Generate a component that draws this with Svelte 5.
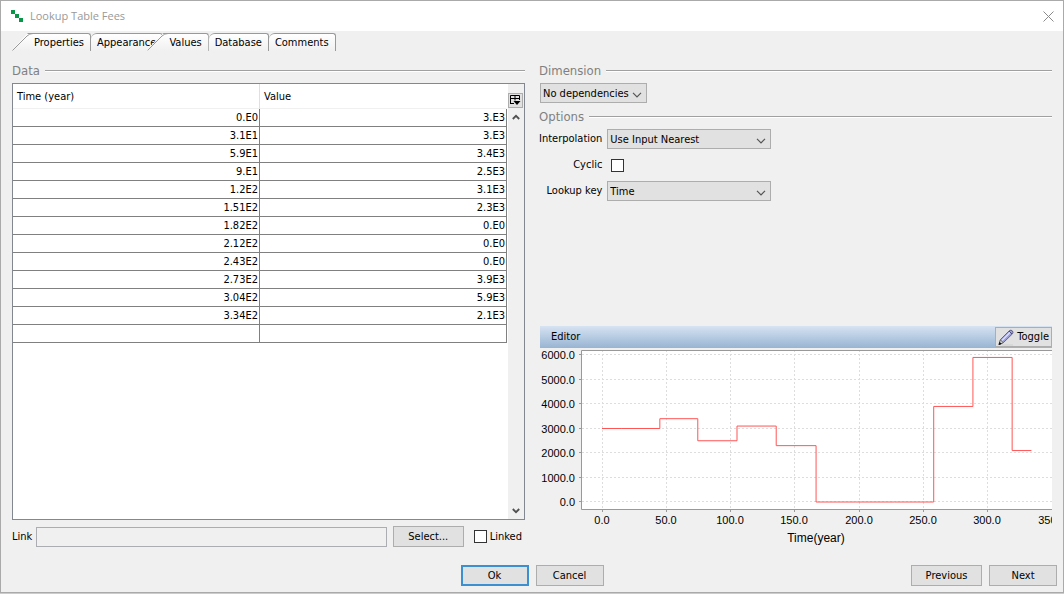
<script lang="ts">
  const tabs = ['Properties', 'Appearance', 'Values', 'Database', 'Comments'];
  let activeTab = $state('Values');

  // time / value pairs of the lookup table
  const rows = [
    { time: 0, value: 3000, timeText: '0.E0', valueText: '3.E3' },
    { time: 31, value: 3000, timeText: '3.1E1', valueText: '3.E3' },
    { time: 59, value: 3400, timeText: '5.9E1', valueText: '3.4E3' },
    { time: 90, value: 2500, timeText: '9.E1', valueText: '2.5E3' },
    { time: 120, value: 3100, timeText: '1.2E2', valueText: '3.1E3' },
    { time: 151, value: 2300, timeText: '1.51E2', valueText: '2.3E3' },
    { time: 182, value: 0, timeText: '1.82E2', valueText: '0.E0' },
    { time: 212, value: 0, timeText: '2.12E2', valueText: '0.E0' },
    { time: 243, value: 0, timeText: '2.43E2', valueText: '0.E0' },
    { time: 273, value: 3900, timeText: '2.73E2', valueText: '3.9E3' },
    { time: 304, value: 5900, timeText: '3.04E2', valueText: '5.9E3' },
    { time: 334, value: 2100, timeText: '3.34E2', valueText: '2.1E3' }
  ];

  let linked = $state(false);
  let cyclic = $state(false);
  let link = $state('');

  // Chart scales
  let chartWidth = $state(513);
  const xTicks = [0, 50, 100, 150, 200, 250, 300, 350];
  const yTicks = [0, 1000, 2000, 3000, 4000, 5000, 6000];
  const originX = 63;
  const xScale = $derived((chartWidth - originX) / 350);

  function px(time: number) {
    return originX + time * xScale;
  }

  function py(value: number) {
    return 154 - value * 0.0245;
  }

  // Nearest interpolation: the value changes half way between two points
  const stepPath = $derived.by(() => {
    let d = `M${px(rows[0].time)} ${py(rows[0].value)}`;
    for (let i = 1; i < rows.length; i++) {
      d += `H${px((rows[i - 1].time + rows[i].time) / 2)}V${py(rows[i].value)}`;
    }
    return d + `H${px(rows[rows.length - 1].time)}`;
  });
</script>

{#snippet chevron()}
  <svg class="chevron" width="10" height="6" viewBox="0 0 10 6" aria-hidden="true">
    <path d="M1 .8L5 4.8L9 .8" fill="none" stroke="#555" stroke-width="1.2" />
  </svg>
{/snippet}

<div class="dialog">
  <header>
    <svg width="12" height="12" viewBox="0 0 12 12" aria-hidden="true">
      <path d="M0 0h4v4H0zM4 4h4v4H4zM8 8h4v4H8z" fill="#0a9648" />
    </svg>
    <span class="title">Lookup Table Fees</span>
    <button class="close" aria-label="Close">
      <svg width="11" height="11" viewBox="0 0 11 11">
        <path d="M.5 .5L10.5 10.5M10.5 .5L.5 10.5" stroke="#8a8a8a" />
      </svg>
    </button>
  </header>

  <div class="tabs" role="tablist">
    {#each tabs as tab, i}
      <button
        role="tab"
        class="tab"
        class:slanted={i === 0 || tab === activeTab}
        class:overlap={i > 0 && tab === activeTab}
        aria-selected={tab === activeTab}
        onclick={() => (activeTab = tab)}
      >
        {#if i === 0 || tab === activeTab}
          <svg class="slope" width="24" height="18" viewBox="0 0 24 18" aria-hidden="true">
            <path d="M.5 17.5L15 3Q17.500 .5 21 .5H24" fill="none" stroke="#999" />
          </svg>
        {/if}
        {tab}
      </button>
    {/each}
  </div>

  <main>
    <section class="column">
      <h2>Data</h2>
      <div class="table-pane">
        <div class="table-area">
          <table>
            <thead>
              <tr><th>Time (year)</th><th>Value</th></tr>
            </thead>
            <tbody>
              {#each rows as row}
                <tr><td>{row.timeText}</td><td>{row.valueText}</td></tr>
              {/each}
              <tr><td></td><td></td></tr>
            </tbody>
          </table>
        </div>
        <div class="side">
          <div class="side-head">
            <button class="column-control" aria-label="Choose columns">
              <svg width="11" height="11" viewBox="0 0 11 11">
                <path d="M.5 9V.5H9.500V5M0 3.500H10M5 .5V5.500M0 8.500H4" fill="none" stroke="#000" />
                <path d="M3.500 6H10.500L7 10z" fill="#000" />
              </svg>
            </button>
          </div>
          <div class="scrollbar">
            <button aria-label="Scroll up">
              <svg width="8" height="6" viewBox="0 0 8 6"><path d="M.8 5L4 1.800L7.200 5" fill="none" stroke="#505050" stroke-width="1.8" /></svg>
            </button>
            <button aria-label="Scroll down">
              <svg width="8" height="6" viewBox="0 0 8 6"><path d="M.8 1L4 4.200L7.200 1" fill="none" stroke="#505050" stroke-width="1.8" /></svg>
            </button>
          </div>
        </div>
      </div>
      <div class="link-row">
        <label for="link">Link</label>
        <input id="link" type="text" readonly bind:value={link} />
        <button class="btn select-btn">Select...</button>
        <label class="check"><input type="checkbox" bind:checked={linked} />Linked</label>
      </div>
    </section>

    <section class="column">
      <h2>Dimension</h2>
      <div class="combo dimension">
        <select aria-label="Dimension">
          <option>No dependencies</option>
        </select>
        {@render chevron()}
      </div>

      <h2 class="options-title">Options</h2>
      <div class="options">
        <label for="interpolation">Interpolation</label>
        <div class="combo">
          <select id="interpolation">
            <option>Use Input Nearest</option>
          </select>
          {@render chevron()}
        </div>
        <label for="cyclic">Cyclic</label>
        <input id="cyclic" type="checkbox" bind:checked={cyclic} />
        <label for="lookup-key">Lookup key</label>
        <div class="combo">
          <select id="lookup-key">
            <option>Time</option>
          </select>
          {@render chevron()}
        </div>
      </div>

      <div class="editor">
        <div class="editor-bar">
          <span>Editor</span>
          <button class="toggle">
            <svg width="16" height="17" viewBox="0 0 16 17" aria-hidden="true">
              <path d="M4 15.500H15V16.500H4z" fill="#cfcfcf" />
              <path d="M1 15.500L2.500 10.500L11.500 1.500Q13 .5 14.500 2Q15.500 3.500 14.500 4.800L5.500 13.500z" fill="#9a9fd6" stroke="#4b4e78" stroke-width=".8" />
              <path d="M4 11.500L12.500 3" stroke="#dcdff8" stroke-width="1.4" />
              <path d="M11 2L14 5" stroke="#4b4e78" />
              <path d="M1 15.700L2.300 11L5.200 13.600z" fill="#d8d8d8" stroke="#444" stroke-width=".6" />
              <path d="M.6 16L1.500 12.800L3.800 15z" fill="#111" />
            </svg>
            Toggle
          </button>
        </div>
        <div class="chart" bind:clientWidth={chartWidth}>
          <svg width={chartWidth} height="199" role="img" aria-label="Value over time">
            <rect x="43" y="2" width={chartWidth} height="160" fill="#fff" />
            {#each yTicks as tick}
              <path class="grid" d="M43 {Math.round(py(tick)) - 0.5}H{chartWidth}" />
              <path class="axis" d="M40 {Math.round(py(tick)) - 0.5}H43" />
              <text class="tick" x="36" y={Math.round(py(tick)) + 4} text-anchor="end">{tick}.0</text>
            {/each}
            {#each xTicks as tick}
              <path class="grid" d="M{Math.floor(px(tick)) + 0.5} 2V161" />
              <path class="axis" d="M{Math.floor(px(tick)) + 0.5} 162V164" />
              <text class="tick" x={Math.floor(px(tick))} y="176" text-anchor="middle">{tick}.0</text>
            {/each}
            <path class="axis" d="M{chartWidth} 2.500H42.500V161.500H{chartWidth}" />
            <path class="series" d={stepPath} />
            <text class="axis-title" x={(chartWidth + 41) / 2} y="194" text-anchor="middle">Time(year)</text>
          </svg>
        </div>
      </div>
    </section>
  </main>

  <footer>
    <div class="center">
      <button class="btn default">Ok</button>
      <button class="btn">Cancel</button>
    </div>
    <div class="nav">
      <button class="btn wide">Previous</button>
      <button class="btn">Next</button>
    </div>
  </footer>
</div>

<style>
  :global(body) {
    margin: 0;
    background: #ccc;
  }

  .dialog {
    box-sizing: border-box;
    min-height: calc(100vh - 1px);
    display: flex;
    flex-direction: column;
    border: 1px solid #aaa;
    background: #f0f0f0;
    color: #000;
    font: 11px/14px 'DejaVu Sans Condensed', 'DejaVu Sans', sans-serif;
    font-stretch: condensed;
  }

  button,
  input,
  select {
    box-sizing: border-box;
    margin: 0;
    padding: 0;
    border: 0;
    border-radius: 0;
    background: none;
    color: inherit;
    font: inherit;
  }

  svg {
    display: block;
  }

  header {
    display: flex;
    align-items: center;
    gap: 7px;
    height: 30px;
    padding: 0 9px 0 10px;
    background: #fff;
  }

  .title {
    flex: 1;
    color: #999;
    font: 11px/16px 'Open Sans', 'Noto Sans', sans-serif;
  }

  .tabs {
    display: flex;
    height: 18px;
    padding: 2px 11px 0;
  }

  .tab {
    position: relative;
    padding: 0 6px;
    border-top: 1px solid #999;
    border-right: 1px solid #999;
    border-radius: 6px 3px 0 0;
    background: linear-gradient(#fff, #f0f0f0);
  }

  .tab.slanted {
    padding-left: 22px;
    border-top-left-radius: 0;
    clip-path: polygon(0 100%, 0 90%, 16px 0, 100% 0, 100% 100%);
  }

  .tab.overlap {
    margin-left: -16px;
  }

  .slope {
    position: absolute;
    left: 0;
    top: -1px;
  }

  main {
    flex: 1;
    display: grid;
    grid-template-columns: 1fr 1fr;
    gap: 14px;
    padding: 11px 11px 18px;
  }

  .column {
    display: flex;
    flex-direction: column;
    min-width: 0;
  }

  h2 {
    display: flex;
    align-items: center;
    gap: 5px;
    margin: 0 0 3px;
    color: #808080;
    font-size: 13px;
    font-weight: normal;
    line-height: 18px;
  }

  h2::after {
    content: '';
    flex: 1;
    height: 1px;
    background: #a0a0a0;
    border-bottom: 1px solid #fff;
  }

  .table-pane {
    flex: 1;
    display: flex;
    border: 1px solid #828790;
    background: #fff;
  }

  .table-area {
    flex: 1;
  }

  table {
    width: 100%;
    table-layout: fixed;
    border-collapse: separate;
    border-spacing: 0;
  }

  th {
    height: 22px;
    padding: 2px 4px 0;
    border-right: 1px solid #e0e0e0;
    border-bottom: 1px solid #f0f0f0;
    font-weight: normal;
    text-align: left;
  }

  th:last-child {
    border-right-color: #fff;
  }

  td {
    height: 17px;
    padding: 0 1px;
    border-right: 1px solid #808080;
    border-bottom: 1px solid #808080;
    text-align: right;
  }

  .side {
    display: flex;
    flex-direction: column;
    width: 16px;
    margin-left: 1px;
    background: #f0f0f0;
  }

  .side-head {
    display: flex;
    align-items: end;
    height: 24px;
  }

  .column-control {
    display: grid;
    place-items: center;
    width: 15px;
    height: 15px;
    border: 1px solid #adadad;
    background: #e1e1e1;
  }

  .scrollbar {
    flex: 1;
    display: flex;
    flex-direction: column;
    justify-content: space-between;
  }

  .scrollbar button {
    display: grid;
    place-items: center;
    width: 15px;
    height: 17px;
  }

  .link-row {
    display: flex;
    align-items: center;
    margin-top: 6px;
  }

  input[type='text'] {
    flex: 1;
    min-width: 0;
    height: 20px;
    margin: 0 6px 0 4px;
    padding: 0 3px;
    border: 1px solid #abadb3;
  }

  input[type='checkbox'] {
    appearance: none;
    width: 13px;
    height: 13px;
    border: 1px solid #333;
    background: #fff;
  }

  input[type='checkbox']:checked {
    box-shadow: inset 0 0 0 2px #fff;
    background: #333;
  }

  .check {
    display: flex;
    align-items: center;
    gap: 3px;
    margin: 0 3px 0 10px;
  }

  .btn {
    width: 68px;
    height: 21px;
    border: 1px solid #adadad;
    background: #e1e1e1;
  }

  .btn.wide,
  .btn.select-btn {
    width: 71px;
  }

  .btn.default {
    border: 2px solid #3c8fd0;
  }

  .combo {
    display: grid;
    align-items: center;
    width: 164px;
  }

  .combo.dimension {
    width: 107px;
    margin-left: 1px;
  }

  .combo select {
    grid-area: 1 / 1;
    appearance: none;
    width: 100%;
    height: 20px;
    padding: 1px 14px 0 2px;
    border: 1px solid #adadad;
    background: #e1e1e1;
  }

  .chevron {
    grid-area: 1 / 1;
    justify-self: end;
    margin: 3px 5px 0 0;
    pointer-events: none;
  }

  .options-title {
    margin-top: 5px;
  }

  .options {
    display: grid;
    grid-template-columns: auto 1fr;
    grid-auto-rows: 20px;
    align-items: center;
    gap: 6px 5px;
  }

  .options label {
    text-align: right;
  }

  .options input {
    margin-left: 4px;
  }

  .editor {
    margin-top: auto;
    padding-top: 20px;
  }

  .editor-bar {
    display: flex;
    align-items: center;
    justify-content: space-between;
    height: 22px;
    margin-left: 1px;
    padding-left: 11px;
    background: linear-gradient(#d6e3f2, #98b4d2);
  }

  .toggle {
    display: flex;
    align-items: center;
    gap: 3px;
    height: 20px;
    padding: 0 2px;
    border: 1px solid #adadad;
    background: #e1e1e1;
  }

  .chart {
    overflow: hidden;
  }

  .grid {
    fill: none;
    stroke: #ddd;
    stroke-dasharray: 2 2;
  }

  .axis {
    fill: none;
    stroke: #999;
  }

  .series {
    fill: none;
    stroke: #ff5555;
  }

  .tick {
    font: 11px 'Liberation Sans', Arial, sans-serif;
  }

  .axis-title {
    font: 12px 'Liberation Sans', Arial, sans-serif;
  }

  footer {
    display: grid;
    grid-template-columns: 1fr auto 1fr;
    padding: 0 6px 6px;
  }

  .center {
    grid-column: 2;
  }

  .center,
  .nav {
    display: flex;
    gap: 7px;
  }

  .nav {
    justify-content: flex-end;
  }
</style>
